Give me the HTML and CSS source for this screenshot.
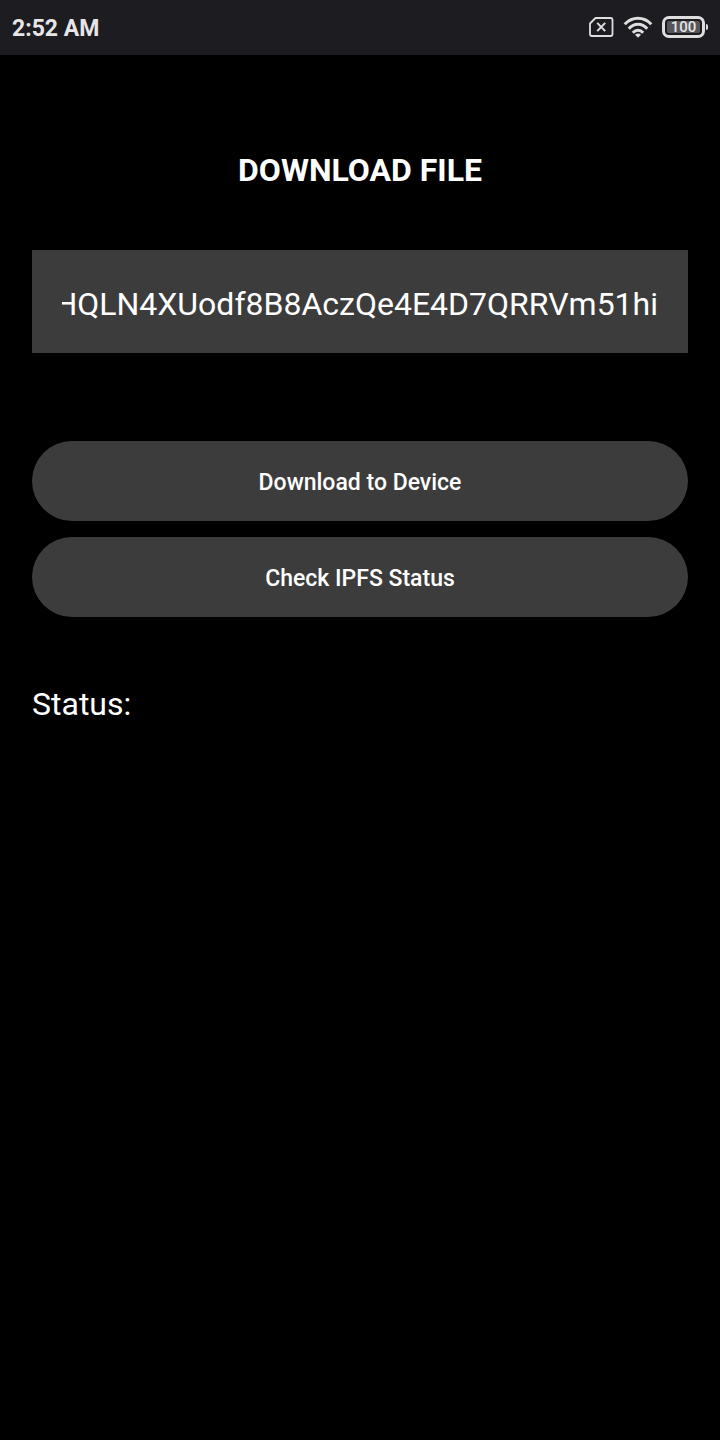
FILE: index.html
```html
<!DOCTYPE html>
<html lang="en">
<head>
<meta charset="utf-8">
<meta name="viewport" content="width=device-width, initial-scale=1">
<title>Download File</title>
<link rel="stylesheet" href="styles.css">
</head>
<body>
<header class="status-bar">
  <time class="clock">2:52 AM</time>
  <div class="indicators">
    <svg class="icon-sim" viewBox="0 0 26 22" aria-label="No SIM" role="img">
      <path d="M7.500 2H22.500Q24.500 2 24.500 4V18Q24.500 20 22.500 20H4Q2 20 2 18V7.500Z" fill="none" stroke="#dededf" stroke-width="1.800" stroke-linejoin="round"/>
      <path d="M9.200 6.900L17.200 15.100M17.200 6.900L9.200 15.100" stroke="#dededf" stroke-width="2"/>
    </svg>
    <svg class="icon-wifi" viewBox="0 0 30 22" aria-label="Wi-Fi" role="img">
      <g fill="none" stroke="#dededf" stroke-width="3">
        <path d="M1.700 8.300Q7.400 2.300 15 2.300T28.300 8.300"/>
        <path d="M5.800 12.700Q9.800 8.300 15 8.300T24.200 12.700"/>
        <path d="M9.800 16.700Q12.200 14.200 15 14.200T20.200 16.700"/>
      </g>
      <path d="M12 18.800Q15 16.400 18 18.800L15 21.800Z" fill="#dededf"/>
    </svg>
    <div class="battery"><span class="battery-level">100</span></div>
  </div>
</header>
<main class="page">
  <h1 class="title">DOWNLOAD FILE</h1>
  <input class="hash-input" type="text" aria-label="File hash" value="HQLN4XUodf8B8AczQe4E4D7QRRVm51hi">
  <div class="actions">
    <button class="action" type="button">Download to Device</button>
    <button class="action" type="button">Check IPFS Status</button>
  </div>
  <p class="status">Status:</p>
</main>
</body>
</html>
```
FILE: styles.css
```css
* { box-sizing: border-box; }

body {
  margin: 0;
  min-height: 100vh;
  background: #000;
  color: #fff;
  font-family: Roboto, sans-serif;
}

.status-bar {
  display: flex;
  align-items: center;
  justify-content: space-between;
  height: 55px;
  padding: 0 15px 0 12px;
  background: #1d1c21;
  color: #e6e6e7;
}

.clock {
  padding-top: 2px;
  font-size: 23px;
  line-height: 28px;
  font-weight: 700;
}

.indicators {
  display: flex;
  align-items: center;
  gap: 9px;
  padding-bottom: 1px;
}

.icon-sim { width: 26px; height: 22px; }
.icon-wifi { width: 30px; height: 22px; }

.battery {
  position: relative;
  display: flex;
  width: 43px;
  height: 22px;
  padding: 2px;
  border: 3px solid #dededf;
  border-radius: 7px;
}

.battery::after {
  content: "";
  position: absolute;
  top: 5px;
  right: -6px;
  width: 2px;
  height: 6px;
  border-radius: 0 2px 2px 0;
  background: #dededf;
}

.battery-level {
  flex: 1;
  background: #56555a;
  border-radius: 2px;
  font-size: 15px;
  line-height: 12px;
  font-weight: 500;
  text-align: center;
}

.page {
  display: flex;
  flex-direction: column;
  padding: 95px 32px 32px;
}

.title {
  margin: 0 0 60px;
  font-size: 32px;
  line-height: 40px;
  font-weight: 700;
  text-align: center;
}

/* Right-anchored so that the tail of a long hash stays in view. */
.hash-input {
  width: 100%;
  height: 103px;
  margin: 0 0 88px;
  padding: 4px 30px 0;
  border: 0;
  border-radius: 0;
  outline: 0;
  background: #3c3c3c;
  color: #fff;
  font: 400 32px/40px Roboto, sans-serif;
  direction: rtl;
}

.actions {
  display: flex;
  flex-direction: column;
  gap: 16px;
  margin-bottom: 67px;
}

.action {
  width: 100%;
  height: 80px;
  padding: 4px 16px 0;
  border: 0;
  border-radius: 40px;
  background: #3c3c3c;
  color: #fff;
  font: 500 23px/28px Roboto, sans-serif;
}

.status {
  margin: 0;
  font-size: 32px;
  line-height: 40px;
}
```
